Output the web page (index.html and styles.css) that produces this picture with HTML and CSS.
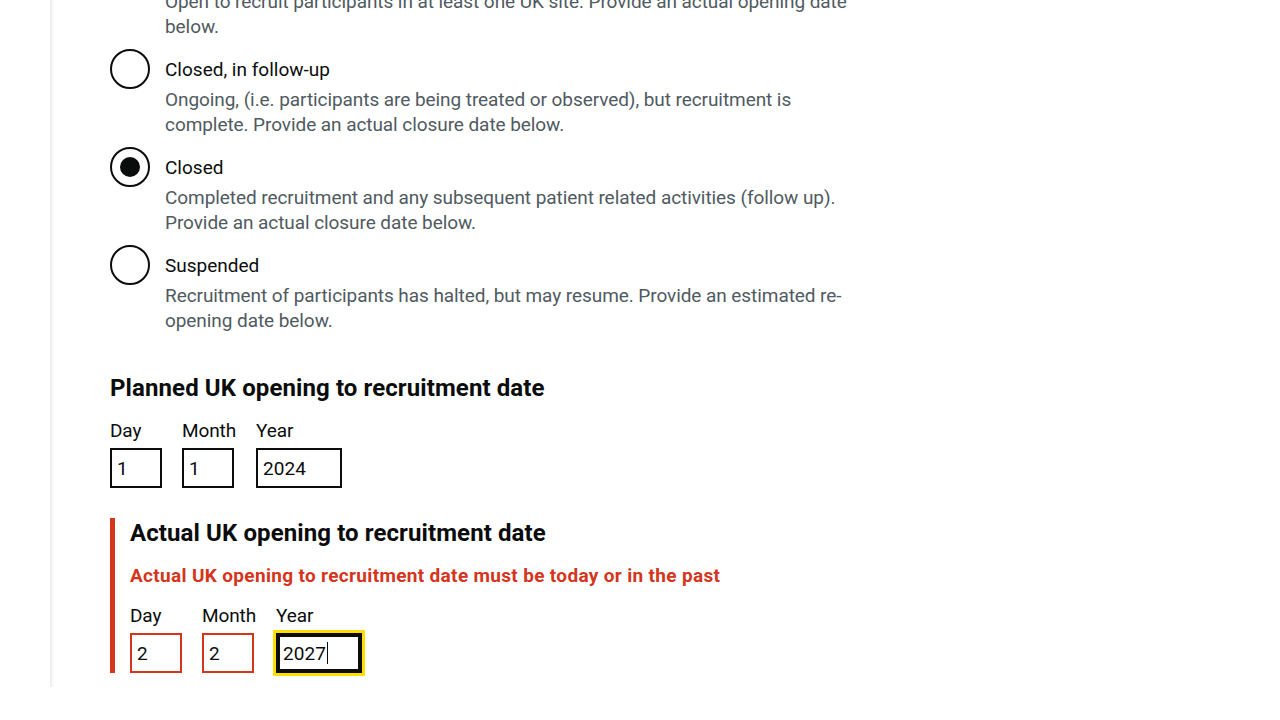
FILE: index.html
```html
<!DOCTYPE html>
<html lang="en">
<head>
<meta charset="utf-8">
<title>Recruitment status</title>
<link rel="stylesheet" href="styles.css">
</head>
<body>
<div class="panel">
  <div class="radios">
    <div class="radio-item first">
      <span class="radio"></span>
      <div class="radio-text">
        <div class="radio-label">Open to recruitment</div>
        <div class="radio-hint">Open to recruit participants in at least one UK site. Provide an actual opening date below.</div>
      </div>
    </div>
    <div class="radio-item">
      <span class="radio"></span>
      <div class="radio-text">
        <div class="radio-label">Closed, in follow-up</div>
        <div class="radio-hint">Ongoing, (i.e. participants are being treated or observed), but recruitment is complete. Provide an actual closure date below.</div>
      </div>
    </div>
    <div class="radio-item">
      <span class="radio checked"></span>
      <div class="radio-text">
        <div class="radio-label">Closed</div>
        <div class="radio-hint">Completed recruitment and any subsequent patient related activities (follow up). Provide an actual closure date below.</div>
      </div>
    </div>
    <div class="radio-item last">
      <span class="radio"></span>
      <div class="radio-text">
        <div class="radio-label">Suspended</div>
        <div class="radio-hint">Recruitment of participants has halted, but may resume. Provide an estimated re-opening date below.</div>
      </div>
    </div>
  </div>

  <div class="form-group">
    <h2 class="legend">Planned UK opening to recruitment date</h2>
    <div class="date-input">
      <div class="date-item">
        <label class="date-label">Day</label>
        <input class="input w2" type="text" value="1">
      </div>
      <div class="date-item">
        <label class="date-label">Month</label>
        <input class="input w2" type="text" value="1">
      </div>
      <div class="date-item">
        <label class="date-label">Year</label>
        <input class="input w4" type="text" value="2024">
      </div>
    </div>
  </div>

  <div class="form-group error-group">
    <h2 class="legend">Actual UK opening to recruitment date</h2>
    <p class="error-message">Actual UK opening to recruitment date must be today or in the past</p>
    <div class="date-input">
      <div class="date-item">
        <label class="date-label">Day</label>
        <input class="input w2 input-error" type="text" value="2">
      </div>
      <div class="date-item">
        <label class="date-label">Month</label>
        <input class="input w2 input-error" type="text" value="2">
      </div>
      <div class="date-item">
        <label class="date-label">Year</label>
        <div class="input w4 input-focus">2027<span class="caret"></span></div>
      </div>
    </div>
  </div>
</div>
</body>
</html>
```

FILE: styles.css
```css
html, body {
  margin: 0;
  padding: 0;
  background: #ffffff;
}

body {
  font-family: Roboto, "Liberation Sans", Arial, sans-serif;
  color: #0b0c0c;
  font-size: 19px;
  line-height: 25px;
  overflow: hidden;
}

.panel {
  margin-left: 50px;
  padding: 0 0 14px 60px;
  background-image: linear-gradient(to right, #e9e9e9, #f6f6f6 2px, #ffffff 4px);
  background-repeat: no-repeat;
  background-size: 5px 100%;
}

.radios {
  width: 745px;
  margin-bottom: 40px;
}

.radio-item {
  display: flex;
  min-height: 40px;
  margin-bottom: 10px;
}

.radio-item.first {
  margin-top: -49px;
}

.radio-item.last {
  margin-bottom: 0;
}

.radio {
  flex: none;
  box-sizing: border-box;
  width: 40px;
  height: 40px;
  border: 2px solid #0b0c0c;
  border-radius: 50%;
  display: flex;
  align-items: center;
  justify-content: center;
}

.radio.checked::after {
  content: "";
  width: 20px;
  height: 20px;
  border-radius: 50%;
  background: #0b0c0c;
}

.radio-text {
  padding-left: 15px;
}

.radio-label {
  padding: 8px 0 5px;
}

.radio-hint {
  color: #505a5f;
  letter-spacing: -0.07px;
}

.form-group {
  margin-bottom: 30px;
}

.form-group:last-child {
  margin-bottom: 0;
}

.legend {
  margin: 0 0 15px;
  font-size: 24px;
  line-height: 30px;
  font-weight: 700;
  letter-spacing: 0.1px;
}

.error-group {
  border-left: 5px solid #d4351c;
  padding-left: 15px;
}

.error-message {
  margin: 0 0 15px;
  color: #d4351c;
  font-weight: 700;
  letter-spacing: 0.33px;
}

.date-input {
  display: flex;
}

.date-item {
  display: flex;
  flex-direction: column;
  align-items: flex-start;
  margin-right: 20px;
}

.date-label {
  display: block;
  margin-bottom: 5px;
  letter-spacing: -0.1px;
}

.input {
  box-sizing: border-box;
  height: 40px;
  margin: 0;
  padding: 5px;
  border: 2px solid #0b0c0c;
  border-radius: 0;
  font-family: inherit;
  font-size: 19px;
  line-height: 25px;
  color: #0b0c0c;
  background: #ffffff;
}

.w2 {
  width: 52px;
}

.w4 {
  width: 86px;
}

.input-error {
  border-color: #d4351c;
}

.input-focus {
  display: flex;
  align-items: center;
  outline: 3px solid #ffdd00;
  outline-offset: 0;
  box-shadow: inset 0 0 0 2px #0b0c0c;
}

.caret {
  display: inline-block;
  width: 1px;
  height: 22px;
  margin-left: 1px;
  background: #0b0c0c;
}
```
